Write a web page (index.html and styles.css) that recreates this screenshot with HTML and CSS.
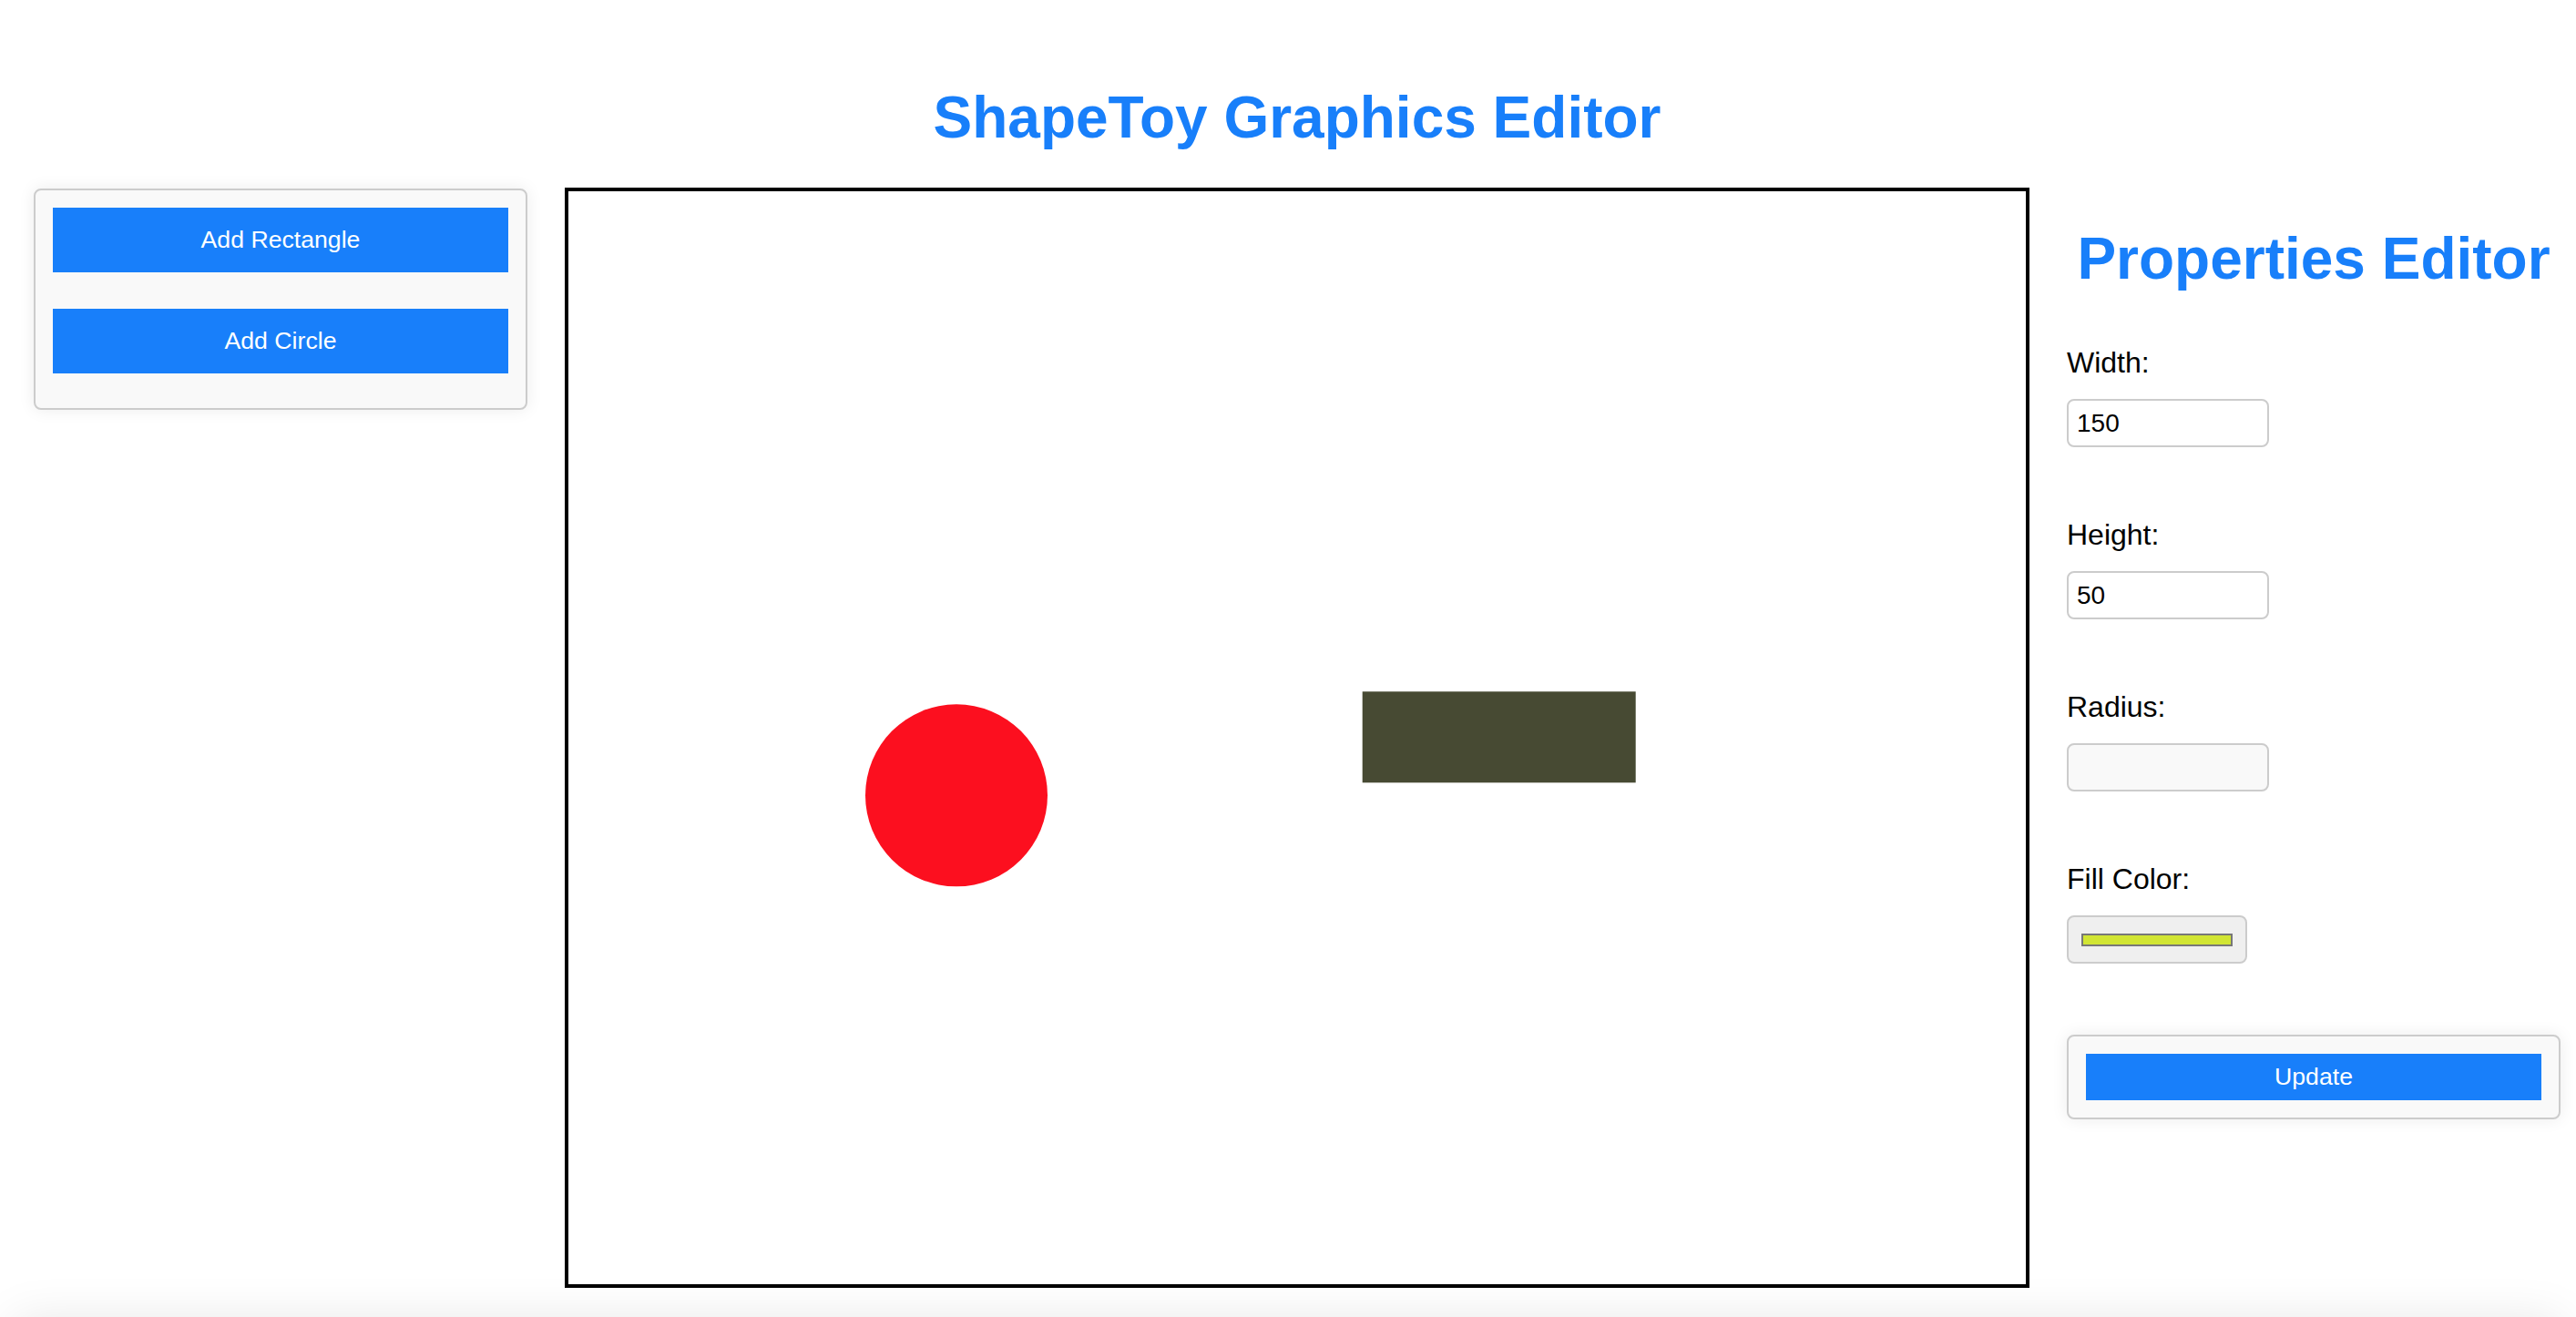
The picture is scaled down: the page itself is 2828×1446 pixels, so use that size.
FILE: index.html
```html
<!DOCTYPE html>
<html lang="en">
<head>
<meta charset="utf-8">
<title>ShapeToy Graphics Editor</title>
<link rel="stylesheet" href="styles.css">
</head>
<body>
<div class="app">
  <h1 class="title">ShapeToy Graphics Editor</h1>
  <div class="workspace">
    <div class="toolbar">
      <button class="btn btn-tool">Add Rectangle</button>
      <button class="btn btn-tool">Add Circle</button>
    </div>
    <div class="canvas-wrap">
      <svg class="canvas" viewBox="0 0 800 600" width="1600" height="1200" xmlns="http://www.w3.org/2000/svg">
        <rect x="435.85" y="274.65" width="150" height="50" fill="#474a33"/>
        <circle cx="213" cy="331.65" r="50" fill="#fc0f1f"/>
      </svg>
    </div>
    <div class="properties">
      <h2 class="props-title">Properties Editor</h2>
      <div class="field">
        <label class="field-label">Width:</label>
        <input class="text-input" type="text" value="150">
      </div>
      <div class="field">
        <label class="field-label">Height:</label>
        <input class="text-input" type="text" value="50">
      </div>
      <div class="field">
        <label class="field-label">Radius:</label>
        <input class="text-input text-input-disabled" type="text" value="">
      </div>
      <div class="field">
        <label class="field-label">Fill Color:</label>
        <div class="color-input"><span class="swatch"></span></div>
      </div>
      <div class="update-card">
        <button class="btn btn-update">Update</button>
      </div>
    </div>
  </div>
  <div class="footer-shadow"></div>
</div>
</body>
</html>
```
FILE: styles.css
```css
html, body {
  margin: 0;
  padding: 0;
  background: #ffffff;
}

body {
  font-family: "Liberation Sans", Arial, Helvetica, sans-serif;
  color: #000;
  overflow: hidden;
}

.app {
  box-sizing: border-box;
  height: 1446px;
  overflow: hidden;
  padding: 92px 17px 0 37px;
}

.title {
  margin: 0 0 40px 0;
  font-size: 64px;
  line-height: 74px;
  font-weight: bold;
  color: #187ffa;
  text-align: center;
}

.workspace {
  display: flex;
  align-items: flex-start;
  gap: 41px;
}

.toolbar {
  box-sizing: border-box;
  width: 542px;
  flex: 0 0 542px;
  display: flex;
  flex-direction: column;
  gap: 40px;
  margin-top: 1px;
  padding: 19px 19px 38px 19px;
  background: #f9f9f9;
  border: 2px solid #cccccc;
  border-radius: 8px;
  box-shadow: 0 0 18px rgba(0, 0, 0, 0.08);
}

.btn {
  display: block;
  width: 100%;
  border: none;
  border-radius: 0;
  background: #187ffa;
  color: #ffffff;
  font-family: "Liberation Sans", Arial, Helvetica, sans-serif;
  font-size: 26.67px;
  line-height: 31px;
  cursor: pointer;
}

.btn-tool {
  height: 71px;
  padding: 0;
}

.canvas-wrap {
  flex: 0 0 auto;
  border: 4px solid #000000;
  background: #ffffff;
  line-height: 0;
}

.canvas {
  display: block;
  width: 1600px;
  height: 1200px;
}

.properties {
  box-sizing: border-box;
  width: 542px;
  flex: 0 0 542px;
}

.props-title {
  margin: 41px 0 59px 0;
  font-size: 64px;
  line-height: 74px;
  font-weight: bold;
  color: #187ffa;
  text-align: center;
  white-space: nowrap;
}

.field {
  margin-bottom: 78px;
}

.field-label {
  display: block;
  font-size: 32px;
  line-height: 37px;
  margin-bottom: 21px;
}

.text-input {
  box-sizing: border-box;
  display: block;
  width: 222px;
  height: 53px;
  padding: 0 9px;
  margin: 0;
  border: 2px solid #cccccc;
  border-radius: 8px;
  background: #ffffff;
  font-family: "Liberation Sans", Arial, Helvetica, sans-serif;
  font-size: 28px;
  color: #000;
  outline: none;
}

.text-input-disabled {
  background: #f9f9f9;
}

.color-input {
  box-sizing: border-box;
  width: 198px;
  height: 53px;
  border: 2px solid #cccccc;
  border-radius: 8px;
  background: #efefef;
  display: flex;
  align-items: center;
  padding: 0 14px;
}

.swatch {
  box-sizing: border-box;
  display: block;
  width: 100%;
  height: 14px;
  background: #d1e533;
  border: 2px solid #777777;
}

.update-card {
  box-sizing: border-box;
  width: 542px;
  padding: 19px;
  background: #f9f9f9;
  border: 2px solid #cccccc;
  border-radius: 8px;
  box-shadow: 0 0 18px rgba(0, 0, 0, 0.08);
}

.btn-update {
  height: 51px;
  padding: 0;
}

.footer-shadow {
  margin: 36px 0 0 -21px;
  height: 200px;
  background: #ffffff;
  box-shadow: 0 0 50px rgba(0, 0, 0, 0.1);
}
```
